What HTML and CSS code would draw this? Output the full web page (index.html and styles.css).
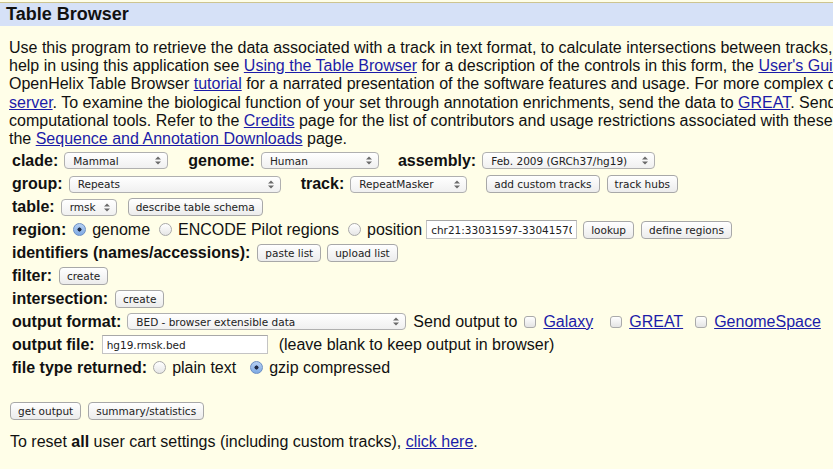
FILE: index.html
```html
<!DOCTYPE html>
<html>
<head>
<meta charset="utf-8">
<title>Table Browser</title>
<link rel="stylesheet" href="styles.css">
</head>
<body>
<div class="page">
  <div class="title">Table Browser</div>
  <p class="intro">
    <span class="line">Use this program to retrieve the data associated with a track in text format, to calculate intersections between tracks, and to retrieve DNA sequence covered by a track. For</span>
    <span class="line">help in using this application see <a href="#">Using the Table Browser</a> for a description of the controls in this form, the <a href="#">User's Guide</a> for general information and sample</span>
    <span class="line">OpenHelix Table Browser <a href="#">tutorial</a> for a narrated presentation of the software features and usage. For more complex queries, you may want to use</span>
    <span class="line"><a href="#">server</a>. To examine the biological function of your set through annotation enrichments, send the data to <a href="#">GREAT</a>. Send data to GenomeSpace for use with</span>
    <span class="line">computational tools. Refer to the <a href="#">Credits</a> page for the list of contributors and usage restrictions associated with these tables. All tables can be</span>
    <span class="line">the <a href="#">Sequence and Annotation Downloads</a> page.</span>
  </p>

  <form class="form">
    <div class="row">
      <b class="lbl">clade:</b>
      <span class="sel w-clade"><span>Mammal</span><svg class="arr" width="6" height="9" viewBox="0 0 6 9"><path d="M0 3.5L3 0.5L6 3.5Z M0 5.5L3 8.5L6 5.5Z" fill="#6a6a6a"/></svg></span>
      <b class="lbl ml20">genome:</b>
      <span class="sel w-genome"><span>Human</span><svg class="arr" width="6" height="9" viewBox="0 0 6 9"><path d="M0 3.5L3 0.5L6 3.5Z M0 5.5L3 8.5L6 5.5Z" fill="#6a6a6a"/></svg></span>
      <b class="lbl ml19">assembly:</b>
      <span class="sel w-assembly"><span>Feb. 2009 (GRCh37/hg19)</span><svg class="arr" width="6" height="9" viewBox="0 0 6 9"><path d="M0 3.5L3 0.5L6 3.5Z M0 5.5L3 8.5L6 5.5Z" fill="#6a6a6a"/></svg></span>
    </div>
    <div class="row r-group">
      <b class="lbl">group:</b>
      <span class="sel w-group"><span>Repeats</span><svg class="arr" width="6" height="9" viewBox="0 0 6 9"><path d="M0 3.5L3 0.5L6 3.5Z M0 5.5L3 8.5L6 5.5Z" fill="#6a6a6a"/></svg></span>
      <b class="lbl ml20">track:</b>
      <span class="sel w-track"><span>RepeatMasker</span><svg class="arr" width="6" height="9" viewBox="0 0 6 9"><path d="M0 3.5L3 0.5L6 3.5Z M0 5.5L3 8.5L6 5.5Z" fill="#6a6a6a"/></svg></span>
      <button type="button" class="btn ml19">add custom tracks</button>
      <button type="button" class="btn">track hubs</button>
    </div>
    <div class="row r-table">
      <b class="lbl">table:</b>
      <span class="sel w-table"><span>rmsk</span><svg class="arr" width="6" height="9" viewBox="0 0 6 9"><path d="M0 3.5L3 0.5L6 3.5Z M0 5.5L3 8.5L6 5.5Z" fill="#6a6a6a"/></svg></span>
      <button type="button" class="btn ml11">describe table schema</button>
    </div>
    <div class="row">
      <b class="lbl">region:</b>
      <input type="radio" class="radio ml1" name="region" checked>
      <span class="opt">genome</span>
      <input type="radio" class="radio" name="region">
      <span class="opt">ENCODE Pilot regions</span>
      <input type="radio" class="radio" name="region">
      <span class="opt">position</span>
      <input type="text" class="txt w-pos" value="chr21:33031597-33041570">
      <button type="button" class="btn ml6">lookup</button>
      <button type="button" class="btn">define regions</button>
    </div>
    <div class="row">
      <b class="lbl">identifiers (names/accessions):</b>
      <button type="button" class="btn ml1">paste list</button>
      <button type="button" class="btn ml6">upload list</button>
    </div>
    <div class="row">
      <b class="lbl">filter:</b>
      <button type="button" class="btn ml1">create</button>
    </div>
    <div class="row">
      <b class="lbl">intersection:</b>
      <button type="button" class="btn ml1">create</button>
    </div>
    <div class="row">
      <b class="lbl">output format:</b>
      <span class="sel w-format"><span>BED - browser extensible data</span><svg class="arr" width="6" height="9" viewBox="0 0 6 9"><path d="M0 3.5L3 0.5L6 3.5Z M0 5.5L3 8.5L6 5.5Z" fill="#6a6a6a"/></svg></span>
      <span class="plain send">Send output to</span>
      <input type="checkbox" class="check">
      <a href="#" class="cblink">Galaxy</a>
      <input type="checkbox" class="check ml17">
      <a href="#" class="cblink">GREAT</a>
      <input type="checkbox" class="check ml12">
      <a href="#" class="cblink">GenomeSpace</a>
    </div>
    <div class="row">
      <b class="lbl">output file:</b>
      <input type="text" class="txt w-file" value="hg19.rmsk.bed">
      <span class="plain leave">(leave blank to keep output in browser)</span>
    </div>
    <div class="row">
      <b class="lbl">file type returned:</b>
      <input type="radio" class="radio ml0" name="ftype">
      <span class="opt">plain text</span>
      <input type="radio" class="radio ml7" name="ftype" checked>
      <span class="opt">gzip compressed</span>
    </div>
    <div class="row actions">
      <button type="button" class="btn ml0">get output</button>
      <button type="button" class="btn">summary/statistics</button>
    </div>
  </form>
  <p class="reset">To reset <b>all</b> user cart settings (including custom tracks), <a href="#">click here</a>.</p>
</div>
</body>
</html>
```

FILE: styles.css
```css
html, body {
  margin: 0;
  padding: 0;
  background: #fffee8;
  overflow: hidden;
}
body {
  width: 833px;
  height: 469px;
  font-family: "Liberation Sans", Arial, Helvetica, sans-serif;
  font-size: 16px;
  color: #111;
}
.page {
  padding-top: 2px;
  white-space: nowrap;
}
a {
  color: #1c1ca8;
  text-decoration: underline;
}
.title {
  background: #d6e1f7;
  border-top: 1px solid #cdc490;
  height: 23px;
  line-height: 23px;
  padding-left: 6px;
  font-weight: bold;
  font-size: 18px;
  color: #111;
}
.intro {
  margin: 0;
  padding: 13px 0 0 9px;
  line-height: 18.2px;
}
.line {
  display: block;
}
.form {
  margin: 0;
  padding-top: 1px;
}
.row {
  display: flex;
  align-items: center;
  height: 23px;
  padding-left: 12px;
}
.r-group { height: 24px; }
.r-table { height: 22px; }
.lbl {
  font-weight: bold;
  margin-right: 6px;
}

.sel {
  display: inline-flex;
  align-items: center;
  justify-content: space-between;
  box-sizing: border-box;
  height: 17px;
  padding: 0 6px 0 8px;
  border: 1px solid #b0b0b0;
  border-radius: 4px;
  background: linear-gradient(#ffffff, #f0f0f0);
  font-family: "DejaVu Sans", Verdana, sans-serif;
  font-size: 10.5px;
  color: #222;
}
.arr { flex: none; }
.w-clade { width: 104px; }
.w-genome { width: 118px; }
.w-assembly { width: 173px; }
.w-group { width: 212px; }
.w-track { width: 117px; }
.w-table { width: 56px; }
.w-format { width: 279px; }

.btn {
  box-sizing: border-box;
  height: 18px;
  padding: 0 7px;
  margin: 0 0 0 7px;
  border: 1px solid #a8a8a8;
  border-radius: 4px;
  background: linear-gradient(#ffffff, #ececec);
  font-family: "DejaVu Sans", Verdana, sans-serif;
  font-size: 10.5px;
  color: #222;
  line-height: 16px;
}

.radio {
  -webkit-appearance: none;
  appearance: none;
  box-sizing: border-box;
  width: 13px;
  height: 13px;
  margin: 0 6px 0 2px;
  border: 1px solid #a9a9a9;
  border-radius: 50%;
  background: linear-gradient(#ffffff, #e6e6e6);
}
.radio:checked {
  border-color: #6c8fc4;
  background: radial-gradient(circle at 50% 50%, #1e2a44 0, #1e2a44 1.8px, transparent 2.3px), linear-gradient(#b6d0f2, #7eaae4);
}
.opt {
  margin-right: 7px;
}
.txt {
  box-sizing: border-box;
  height: 19px;
  padding: 0 4px;
  margin: 0;
  border: 1px solid #c4c4c4;
  border-top-color: #a8a8a8;
  background: #fff;
  font-family: "DejaVu Sans", Verdana, sans-serif;
  font-size: 10.5px;
  color: #222;
}
.w-pos { width: 151px; margin-left: -3px; }
.w-file { width: 166px; margin-left: 1px; }
.check {
  -webkit-appearance: none;
  appearance: none;
  box-sizing: border-box;
  width: 12px;
  height: 12px;
  margin: 0 7px 0 7px;
  border: 1px solid #aaaaaa;
  border-radius: 3px;
  background: linear-gradient(#ffffff, #e4e4e4);
}
.send { margin-left: 7px; }
.leave { margin-left: 11px; }
.actions {
  margin-top: 20px;
  padding-left: 10px;
}
.reset {
  margin: 10px 0 0 10px;
  line-height: 20px;
}

/* spacing utilities (last so they win) */
.ml0 { margin-left: 0; }
.ml1 { margin-left: 1px; }
.ml6 { margin-left: 6px; }
.ml7 { margin-left: 7px; }
.ml11 { margin-left: 11px; }
.ml12 { margin-left: 12px; }
.ml17 { margin-left: 17px; }
.ml19 { margin-left: 19px; }
.ml20 { margin-left: 20px; }
```
